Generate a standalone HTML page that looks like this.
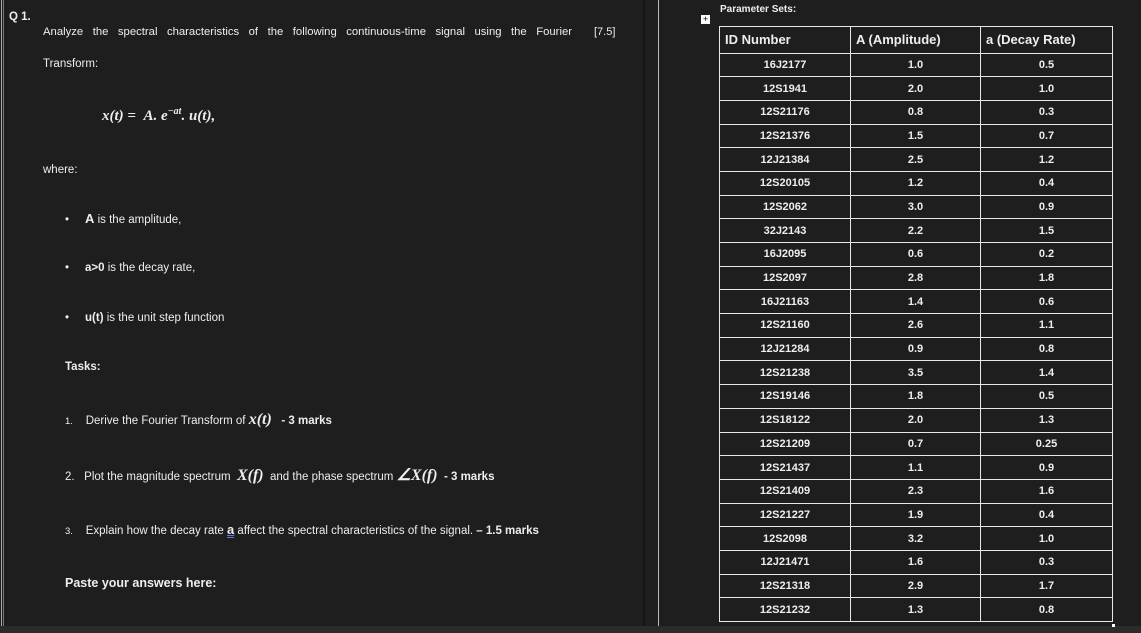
<!DOCTYPE html>
<html><head><meta charset="utf-8"><style>
body{margin:0;width:1141px;height:633px;background:#1e1e1e;position:relative;overflow:hidden;font-family:"Liberation Sans",sans-serif;color:#eee}
.a{position:absolute;white-space:nowrap;font-size:11.5px}
b{font-weight:bold}
.m{font-family:"Liberation Serif",serif;font-style:italic;font-weight:bold}
table{position:absolute;left:719px;top:26px;border-collapse:collapse;font-size:11px;font-weight:bold;color:#eee;table-layout:fixed;width:393px}
td{border:1.5px solid #e8e8e8;text-align:center;height:22.7px;padding:0}
th{border:1.5px solid #e8e8e8;text-align:left;height:25.5px;font-size:13px;padding:0 0 0 5px}
</style></head><body>
<div style="position:absolute;left:1px;top:0;width:1px;height:626px;background:#aaa"></div>
<div style="position:absolute;left:3px;top:0;width:1px;height:626px;background:#777"></div>
<div style="position:absolute;left:643px;top:0;width:2px;height:633px;background:#151515"></div>
<div style="position:absolute;left:658px;top:0;width:1px;height:626px;background:#bbb"></div>
<div style="position:absolute;left:0;top:626px;width:1141px;height:7px;background:#2b2b2b"></div>
<div style="position:absolute;left:1112px;top:624px;width:3px;height:3px;background:#fff"></div>

<div class="a" style="left:9px;top:11px"><b>Q 1.</b></div>
<div class="a" style="left:43px;top:26px;width:529px;text-align:justify;text-align-last:justify;font-size:11.3px">Analyze the spectral characteristics of the following continuous-time signal using the Fourier</div>
<div class="a" style="left:594px;top:26px;font-size:11px">[7.5]</div>
<div class="a" style="left:43px;top:58px">Transform:</div>
<div class="a m" style="left:102px;top:106px;font-size:15px">x(t) = &nbsp;A. e<sup style="font-size:10px">−at</sup>. u(t),</div>
<div class="a" style="left:43px;top:164px">where:</div>
<div class="a" style="left:65px;top:211px">•&nbsp;&nbsp;&nbsp;&nbsp;&nbsp;<b style="font-size:13px">A</b> is the amplitude,</div>
<div class="a" style="left:65px;top:262px">•&nbsp;&nbsp;&nbsp;&nbsp;&nbsp;<b>a&gt;0</b> is the decay rate,</div>
<div class="a" style="left:65px;top:312px">•&nbsp;&nbsp;&nbsp;&nbsp;&nbsp;<b>u(t)</b> is the unit step function</div>
<div class="a" style="left:65px;top:361px"><b>Tasks:</b></div>
<div class="a" style="left:65px;top:411px"><span style="font-size:9.5px">1.</span>&nbsp;&nbsp;&nbsp;&nbsp;Derive the Fourier Transform of <span class="m" style="font-size:16px">x(t)</span> &nbsp;&nbsp;<b>- 3 marks</b></div>
<div class="a" style="left:65px;top:465px">2.&nbsp;&nbsp;&nbsp;Plot the magnitude spectrum &nbsp;<span class="m" style="font-size:16px">X(f)</span>&nbsp; and the phase spectrum <span class="m" style="font-size:16px">∠X(f)</span>&nbsp; <b>- 3 marks</b></div>
<div class="a" style="left:65px;top:522px"><span style="font-size:9.5px">3.</span>&nbsp;&nbsp;&nbsp;&nbsp;Explain how the decay rate <b style="font-size:13px;text-decoration:underline double #67c">a</b> affect the spectral characteristics of the signal. <b>– 1.5 marks</b></div>
<div class="a" style="left:65px;top:576px;font-size:12.5px"><b>Paste your answers here:</b></div>

<div style="position:absolute;left:701px;top:15px;width:9px;height:9px;background:#fff;color:#000;font-size:9px;line-height:9px;text-align:center">+</div>
<div class="a" style="left:720px;top:4px;font-size:10px"><b>Parameter Sets:</b></div>
<table>
<colgroup><col style="width:131px"><col style="width:130px"><col style="width:132px"></colgroup>
<tr><th>ID Number</th><th>A (Amplitude)</th><th>a (Decay Rate)</th></tr>
<tr><td>16J2177</td><td>1.0</td><td>0.5</td></tr>
<tr><td>12S1941</td><td>2.0</td><td>1.0</td></tr>
<tr><td>12S21176</td><td>0.8</td><td>0.3</td></tr>
<tr><td>12S21376</td><td>1.5</td><td>0.7</td></tr>
<tr><td>12J21384</td><td>2.5</td><td>1.2</td></tr>
<tr><td>12S20105</td><td>1.2</td><td>0.4</td></tr>
<tr><td>12S2062</td><td>3.0</td><td>0.9</td></tr>
<tr><td>32J2143</td><td>2.2</td><td>1.5</td></tr>
<tr><td>16J2095</td><td>0.6</td><td>0.2</td></tr>
<tr><td>12S2097</td><td>2.8</td><td>1.8</td></tr>
<tr><td>16J21163</td><td>1.4</td><td>0.6</td></tr>
<tr><td>12S21160</td><td>2.6</td><td>1.1</td></tr>
<tr><td>12J21284</td><td>0.9</td><td>0.8</td></tr>
<tr><td>12S21238</td><td>3.5</td><td>1.4</td></tr>
<tr><td>12S19146</td><td>1.8</td><td>0.5</td></tr>
<tr><td>12S18122</td><td>2.0</td><td>1.3</td></tr>
<tr><td>12S21209</td><td>0.7</td><td>0.25</td></tr>
<tr><td>12S21437</td><td>1.1</td><td>0.9</td></tr>
<tr><td>12S21409</td><td>2.3</td><td>1.6</td></tr>
<tr><td>12S21227</td><td>1.9</td><td>0.4</td></tr>
<tr><td>12S2098</td><td>3.2</td><td>1.0</td></tr>
<tr><td>12J21471</td><td>1.6</td><td>0.3</td></tr>
<tr><td>12S21318</td><td>2.9</td><td>1.7</td></tr>
<tr><td>12S21232</td><td>1.3</td><td>0.8</td></tr>
</table>
</body></html>
